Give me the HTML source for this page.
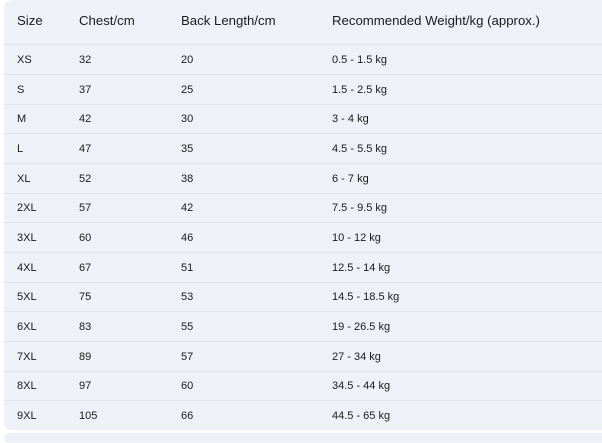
<!DOCTYPE html>
<html><head><style>
html,body{margin:0;padding:0;background:#fff;width:602px;height:436px;overflow:hidden}
.t{position:absolute;left:4px;top:0;width:610px;height:430px;background:#eef2f8;border-radius:8px;font-family:"Liberation Sans",Arial,sans-serif;color:#1a1a1a}
.b{position:absolute;left:4px;top:433px;width:610px;height:10px;background:#eef2f8;border-radius:6px}
.r{position:absolute;left:0;width:100%;border-bottom:1px solid #e1e5ec;box-sizing:border-box}
.r span{position:absolute;white-space:nowrap}
.h{top:0;height:45px;font-size:13.2px}
.h span{top:13px}
.d{height:30px;font-size:11px}
.d span{top:9px}
.c1{left:13px}.c2{left:75px}.c3{left:177px}.c4{left:328px}
</style></head><body>
<div class="t">
<div class="r h"><span class="c1">Size</span><span class="c2">Chest/cm</span><span class="c3">Back Length/cm</span><span class="c4">Recommended Weight/kg (approx.)</span></div>
<div class="r d" style="top:45px"><span class="c1">XS</span><span class="c2">32</span><span class="c3">20</span><span class="c4">0.5 - 1.5 kg</span></div>
<div class="r d" style="top:75px"><span class="c1">S</span><span class="c2">37</span><span class="c3">25</span><span class="c4">1.5 - 2.5 kg</span></div>
<div class="r d" style="top:104px"><span class="c1">M</span><span class="c2">42</span><span class="c3">30</span><span class="c4">3 - 4 kg</span></div>
<div class="r d" style="top:134px"><span class="c1">L</span><span class="c2">47</span><span class="c3">35</span><span class="c4">4.5 - 5.5 kg</span></div>
<div class="r d" style="top:164px"><span class="c1">XL</span><span class="c2">52</span><span class="c3">38</span><span class="c4">6 - 7 kg</span></div>
<div class="r d" style="top:193px"><span class="c1">2XL</span><span class="c2">57</span><span class="c3">42</span><span class="c4">7.5 - 9.5 kg</span></div>
<div class="r d" style="top:223px"><span class="c1">3XL</span><span class="c2">60</span><span class="c3">46</span><span class="c4">10 - 12 kg</span></div>
<div class="r d" style="top:253px"><span class="c1">4XL</span><span class="c2">67</span><span class="c3">51</span><span class="c4">12.5 - 14 kg</span></div>
<div class="r d" style="top:282px"><span class="c1">5XL</span><span class="c2">75</span><span class="c3">53</span><span class="c4">14.5 - 18.5 kg</span></div>
<div class="r d" style="top:312px"><span class="c1">6XL</span><span class="c2">83</span><span class="c3">55</span><span class="c4">19 - 26.5 kg</span></div>
<div class="r d" style="top:342px"><span class="c1">7XL</span><span class="c2">89</span><span class="c3">57</span><span class="c4">27 - 34 kg</span></div>
<div class="r d" style="top:371px"><span class="c1">8XL</span><span class="c2">97</span><span class="c3">60</span><span class="c4">34.5 - 44 kg</span></div>
<div class="r d" style="top:401px;border-bottom:none"><span class="c1">9XL</span><span class="c2">105</span><span class="c3">66</span><span class="c4">44.5 - 65 kg</span></div>
</div>
<div class="b"></div>
</body></html>
